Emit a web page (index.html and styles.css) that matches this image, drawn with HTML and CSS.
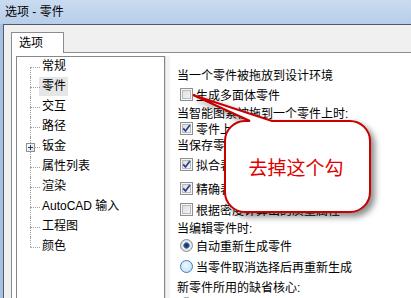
FILE: index.html
```html
<!DOCTYPE html>
<html lang="zh-CN">
<head>
  <meta charset="UTF-8" />
  <title>选项 - 零件</title>
  <link rel="stylesheet" href="styles.css">
</head>
<body>
  <div class="titlebar">选项 - 零件</div>
  <div class="frame">
    <div class="tabs"><div class="tab">选项</div></div>
    <div class="panel">
      <ul class="tree">
        <li class="node first"><span class="branch"></span><span class="label">常规</span></li>
        <li class="node"><span class="branch"></span><span class="label selected">零件</span></li>
        <li class="node"><span class="branch"></span><span class="label">交互</span></li>
        <li class="node"><span class="branch"></span><span class="label">路径</span></li>
        <li class="node">
          <span class="branch">
            <span class="expander"><svg width="7" height="7" viewBox="0 0 7 7"><path d="M1 3.5h5M3.5 1v5" stroke="#1e3a64" stroke-width="1"/></svg></span>
          </span>
          <span class="label">钣金</span>
        </li>
        <li class="node"><span class="branch"></span><span class="label">属性列表</span></li>
        <li class="node"><span class="branch"></span><span class="label">渲染</span></li>
        <li class="node"><span class="branch"></span><span class="label">AutoCAD 输入</span></li>
        <li class="node"><span class="branch"></span><span class="label">工程图</span></li>
        <li class="node last"><span class="branch"></span><span class="label">颜色</span></li>
      </ul>
      <div class="splitter"></div>
      <div class="options">
        <div class="row">当一个零件被拖放到设计环境</div>
        <div class="row"><span class="check"></span>生成多面体零件</div>
        <div class="row">当智能图素被拖到一个零件上时:</div>
        <div class="row"><span class="check on"><svg viewBox="0 0 11 11"><path d="M2.2 5.4l2.3 2.6 4.4-6" fill="none" stroke="#2c3f8c" stroke-width="1.7"/></svg></span>零件上</div>
        <div class="row">当保存零</div>
        <div class="row"><span class="check on"><svg viewBox="0 0 11 11"><path d="M2.2 5.4l2.3 2.6 4.4-6" fill="none" stroke="#2c3f8c" stroke-width="1.7"/></svg></span>拟合表</div>
        <div class="row"><span class="check on"><svg viewBox="0 0 11 11"><path d="M2.2 5.4l2.3 2.6 4.4-6" fill="none" stroke="#2c3f8c" stroke-width="1.7"/></svg></span>精确表</div>
        <div class="row"><span class="check"></span>根据密度计算出的质量属性</div>
        <div class="row">当编辑零件时:</div>
        <div class="row"><span class="radio on"></span>自动重新生成零件</div>
        <div class="row"><span class="radio hover"></span>当零件取消选择后再重新生成</div>
        <div class="row">新零件所用的缺省核心:</div>
        <div class="row"><span class="radio"></span></div>
      </div>
    </div>
  </div>

  <div class="callout">
    <svg class="callout-shape" width="190" height="130" viewBox="0 0 190 130">
      <path d="M55 30H60L3 4L82 30H160A20 20 0 0 1 180 50V101A20 20 0 0 1 160 121H55A20 20 0 0 1 35 101V50A20 20 0 0 1 55 30Z" fill="#fff" stroke="#c80000" stroke-width="2"/>
    </svg>
    <span class="callout-text">去掉这个勾</span>
  </div>
</body>
</html>
```

FILE: styles.css
```css
body {
  margin: 0;
  width: 411px;
  height: 298px;
  overflow: hidden;
  position: relative;
  font-family: "Liberation Sans", "Noto Sans CJK SC", sans-serif;
  font-size: 12px;
  color: #000;
  background: #a6c0e0;
}
.titlebar {
  height: 24px;
  line-height: 24px;
  padding-left: 5px;
  background: linear-gradient(#c9dbf0, #b7ceea);
}
.frame {
  margin-left: 3px;
  border-left: 1px solid #505967;
  border-top: 1px solid #505967;
  background: #f0f0f0;
  padding: 7px 0 0 7px;
  height: 400px;
}
.tabs {
  display: flex;
}
.tab {
  position: relative;
  z-index: 1;
  box-sizing: border-box;
  width: 53px;
  height: 21px;
  margin-bottom: -1px;
  padding-left: 7px;
  line-height: 20px;
  border: 1px solid #898c95;
  border-bottom: none;
  background: #fff;
}
.panel {
  display: flex;
  height: 400px;
  padding: 3px 0 0 4px;
  border: 1px solid #898c95;
  border-right: none;
  background: #fff;
}
.tree {
  list-style: none;
  margin: 0;
  padding: 0 0 0 13px;
  width: 149px;
  box-sizing: border-box;
  border: 1px solid #828790;
  height: 400px;
}
.node {
  display: flex;
  height: 20px;
}
.branch {
  position: relative;
  width: 10px;
  display: flex;
  flex-direction: column;
}
.branch::before {
  content: "";
  height: 10px;
  border-left: 1px dotted #a0a0a0;
}
.branch::after {
  content: "";
  flex: 1;
  border-left: 1px dotted #a0a0a0;
  border-top: 1px dotted #a0a0a0;
}
.first .branch::before {
  border-left-color: transparent;
}
.last .branch::after {
  border-left-color: transparent;
}
.expander {
  position: absolute;
  left: -4px;
  top: 6px;
  width: 9px;
  height: 9px;
  box-sizing: border-box;
  border: 1px solid #919191;
  background: linear-gradient(135deg, #fff, #dedede);
}
.expander svg {
  display: block;
}
.label {
  margin-left: -1px;
  padding: 0 2px 0 3px;
  height: 19px;
  line-height: 19px;
  white-space: nowrap;
}
.label.selected {
  background: #e6e6e6;
}
.splitter {
  width: 4px;
  border-left: 1px solid #dedede;
  background: #f3f3f3;
}
.options {
  flex: 1;
  display: grid;
  grid-template-rows: 20px 20px 17px 15px 17px 23px 24px 19px 16px 20px 22px 18px 16px;
  align-content: start;
  padding: 8px 0 0 7px;
}
.row {
  display: flex;
  align-items: center;
  white-space: nowrap;
}
.check,
.radio {
  flex: none;
  box-sizing: border-box;
  width: 13px;
  height: 13px;
  margin: 0 3px;
}
.check {
  border: 1px solid #8e8f8f;
  background: linear-gradient(135deg, #d9d9d9, #f9f9f9);
  box-shadow: inset 0 0 0 1px #f6f6f6, inset 0 0 0 2px #b8bcc2;
}
.check svg {
  display: block;
  width: 11px;
  height: 11px;
}
.radio {
  border: 1px solid #8e8f8f;
  border-radius: 50%;
  background: radial-gradient(circle at 50% 50%, #f2f2f2, #d8d8d8);
}
.radio.on {
  background: radial-gradient(circle at 50% 50%, #13305e 0, #1d4a86 2px, #6b93c2 3px, #f1f1f1 3.6px, #d6d6d6 6px);
}
.radio.hover {
  border-color: #3d7fb3;
  background: radial-gradient(circle at 45% 40%, #eef8fe, #b6ddf7);
}
.callout {
  position: absolute;
  left: 225px;
  top: 121px;
  width: 145px;
  height: 91px;
  display: flex;
  align-items: center;
  justify-content: center;
  padding-right: 3px;
  box-sizing: border-box;
}
.callout-shape {
  position: absolute;
  left: -35px;
  top: -30px;
  overflow: visible;
  filter: drop-shadow(4px 4px 3px rgba(0, 0, 0, 0.45));
}
.callout-text {
  position: relative;
  color: #e00000;
  font-size: 19px;
}
```
